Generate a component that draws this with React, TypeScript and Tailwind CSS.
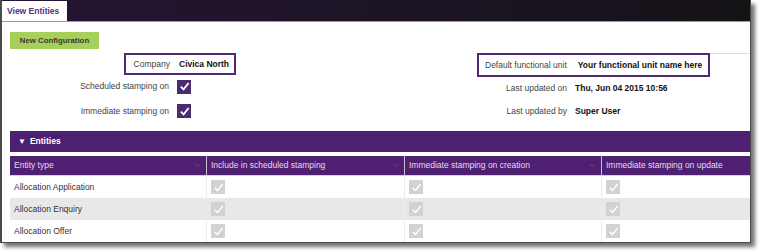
import { ChevronDown } from "lucide-react"

const font = { fontFamily: '"Liberation Sans", Arial, sans-serif' }

function PurpleCheck() {
  return (
    <div className="w-[14px] h-[14px] bg-[#4b2a70] flex items-center justify-center">
      <svg width="11" height="11" viewBox="0 0 12 12">
        <path d="M2 6.2 L5 9.2 L10.5 2.2" stroke="#fff" strokeWidth="2" fill="none" />
      </svg>
    </div>
  )
}

function GrayCheck() {
  return (
    <div className="w-[14px] h-[14px] bg-[#d2d2d2] flex items-center justify-center">
      <svg width="11" height="11" viewBox="0 0 12 12">
        <path d="M2 6.4 L5 9.2 L10.5 2.2" stroke="#fff" strokeWidth="1.6" fill="none" />
      </svg>
    </div>
  )
}

const columns = [
  { label: "Entity type", w: "w-[197px]" },
  { label: "Include in scheduled stamping", w: "w-[198px]" },
  { label: "Immediate stamping on creation", w: "w-[197px]" },
  { label: "Immediate stamping on update", w: "flex-1" },
]

const rows = ["Allocation Application", "Allocation Enquiry", "Allocation Offer"]

export default function App() {
  return (
    <div className="w-[760px] h-[252px] bg-white text-[8.5px]" style={font}>
      <div className="w-[751px] h-[243px] border-l-2 border-r border-b border-[#4a4a4a] shadow-[4px_4px_4px_rgba(0,0,0,0.55)] bg-white flex flex-col">
        {/* tab bar */}
        <div className="h-[22px] bg-gradient-to-r from-[#251535] to-[#151216] flex items-end border-b border-[#9a9a9a]">
          <div className="h-[20px] w-[65px] bg-white flex items-center pl-[5px] font-bold text-[#52347a]">
            View Entities
          </div>
        </div>

        <div className="pl-[8px] pt-[10px]">
          <button className="h-[17px] w-[89px] bg-[#a6cf5c] font-bold text-[#3a3a2e] text-[7.8px] flex items-center justify-center">
            New Configuration
          </button>
        </div>

        {/* form */}
        <div className="flex mt-[4px] h-[69px]">
          <div className="w-[468px] flex flex-col">
            <div className="ml-[122px] w-[112px] h-[24px] border-2 border-[#4f2a74] flex items-center">
              <span className="w-[44px] text-right text-[#444]">Company</span>
              <span className="ml-[9px] font-bold text-[#111]">Civica North</span>
            </div>
            <div className="flex items-center h-[24px] mt-[1px]">
              <span className="w-[167px] text-right text-[#444]">Scheduled stamping on</span>
              <span className="ml-[8px]"><PurpleCheck /></span>
            </div>
            <div className="flex items-center h-[24px] mt-[3px]">
              <span className="w-[167px] text-right text-[#444]">Immediate stamping on</span>
              <span className="ml-[8px]"><PurpleCheck /></span>
            </div>
          </div>
          <div className="flex-1 flex flex-col">
            <div className="flex items-center h-[24px]">
              <div className="ml-[7px] w-[233px] h-[24px] border-2 border-[#4f2a74] flex items-center">
                <span className="ml-[6px] text-[#444]">Default functional unit</span>
                <span className="ml-[11px] font-bold text-[#111]">Your functional unit name here</span>
              </div>
              <div className="flex-1 h-[24px] border-t border-[#dcdcdc]" />
            </div>
            <div className="flex items-center h-[24px]">
              <span className="w-[97px] text-right text-[#444]">Last updated on</span>
              <span className="ml-[8px] font-bold text-[#111]">Thu, Jun 04 2015 10:56</span>
            </div>
            <div className="flex items-center h-[24px] mt-[1px]">
              <span className="w-[97px] text-right text-[#444]">Last updated by</span>
              <span className="ml-[8px] font-bold text-[#111]">Super User</span>
            </div>
          </div>
        </div>

        {/* entities */}
        <div className="ml-[8px] mt-[9px] flex flex-col">
          <div className="h-[21px] bg-[#4e2072] flex items-center pl-[8px] text-white font-bold">
            <span className="text-[8px] mr-[4px]">▼</span>
            Entities
          </div>
          <div className="h-[20px] mt-[4px] bg-[#4f1f72] flex border-b border-[#d8d0e0]">
            {columns.map((c, i) => (
              <div
                key={c.label}
                className={`${c.w} flex items-center justify-between pl-[4px] pr-[4px] text-[#e4dcee] ${i < 3 ? "border-r border-[#c8bcd6]" : ""}`}
              >
                <span>{c.label}</span>
                {i < 3 && <ChevronDown size={9} strokeWidth={1.2} className="text-[#8f78a8]" />}
              </div>
            ))}
          </div>
          {rows.map((r, ri) => (
            <div key={r} className={`h-[22px] flex ${ri === 1 ? "bg-[#e8e8e8]" : "bg-white"}`}>
              {columns.map((c, i) => (
                <div key={c.label} className={`${c.w} flex items-center pl-[4px] ${i < 3 ? "border-r border-[#ececec]" : ""}`}>
                  {i === 0 ? <span className="text-[#333]">{r}</span> : <GrayCheck />}
                </div>
              ))}
            </div>
          ))}
        </div>
      </div>
    </div>
  )
}
